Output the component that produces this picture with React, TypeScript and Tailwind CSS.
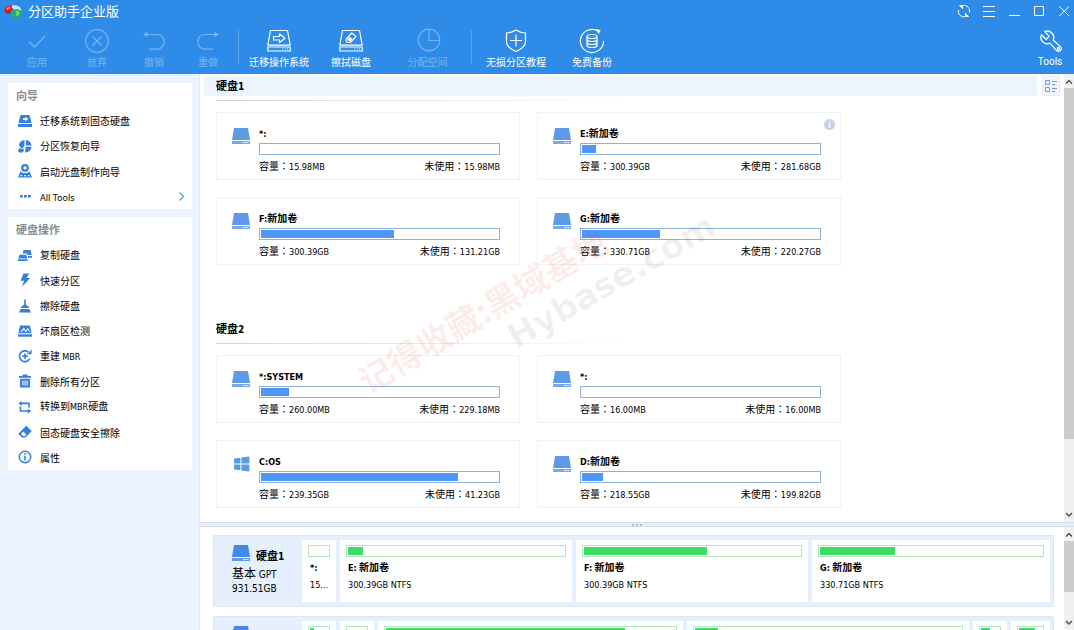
import { ReactNode } from "react";
import clsx from "clsx";

type Volume = {
  name: string;
  label?: string;
  total: string;
  free: string;
  used: number; // percent of the bar
  windows?: boolean;
  info?: boolean;
};

type Partition = {
  name: string;
  label?: string;
  size: string;
  used: number;
  weight: number;
};

const disks: { title: string; volumes: Volume[] }[] = [
  {
    title: "硬盘1",
    volumes: [
      { name: "*:", total: "15.98MB", free: "15.98MB", used: 0 },
      { name: "E:", label: "新加卷", total: "300.39GB", free: "281.68GB", used: 6, info: true },
      { name: "F:", label: "新加卷", total: "300.39GB", free: "131.21GB", used: 56 },
      { name: "G:", label: "新加卷", total: "330.71GB", free: "220.27GB", used: 33 },
    ],
  },
  {
    title: "硬盘2",
    volumes: [
      { name: "*:SYSTEM", total: "260.00MB", free: "229.18MB", used: 12 },
      { name: "*:", total: "16.00MB", free: "16.00MB", used: 0 },
      { name: "C:OS", total: "239.35GB", free: "41.23GB", used: 83, windows: true },
      { name: "D:", label: "新加卷", total: "218.55GB", free: "199.82GB", used: 9 },
    ],
  },
];

const maps: { title: string; size: string; partitions: Partition[] }[] = [
  {
    title: "硬盘1",
    size: "931.51GB",
    partitions: [
      { name: "*:", size: "15.98MB", used: 0, weight: 34 },
      { name: "E:", label: "新加卷", size: "300.39GB NTFS", used: 7, weight: 232 },
      { name: "F:", label: "新加卷", size: "300.39GB NTFS", used: 57, weight: 232 },
      { name: "G:", label: "新加卷", size: "330.71GB NTFS", used: 34, weight: 238 },
    ],
  },
  {
    title: "硬盘2",
    size: "476.94GB",
    partitions: [
      { name: "*:", label: "SYSTEM", size: "260.00MB", used: 22, weight: 34 },
      { name: "*:", size: "16.00MB", used: 0, weight: 34 },
      { name: "C:", label: "OS", size: "239.35GB NTFS", used: 83, weight: 304 },
      { name: "D:", label: "新加卷", size: "218.55GB NTFS", used: 9, weight: 282 },
      { name: "*:", size: "1.00GB", used: 52, weight: 34 },
      { name: "*:", size: "17.00GB", used: 70, weight: 39 },
    ],
  },
];

const Latin = ({ children, className }: { children: ReactNode; className?: string }) => (
  <span className={clsx("font-['DejaVu_Sans_Condensed','Open_Sans',sans-serif]", className)}>{children}</span>
);

/* ---------- icons ---------- */

const DriveIcon = ({ className }: { className?: string }) => (
  <svg width="18" height="16" viewBox="0 0 18 16" className={className} fill="currentColor" aria-hidden="true">
    <path d="M2 0h14l2 12H0z" />
    <path d="M0 13h18v3H0z" opacity=".85" />
    <path d="M11 14h1.400v1H11zM13.200 14h1.200v1h-1.200zM15.200 14h1.200v1h-1.200z" fill="#fff" />
  </svg>
);

const WindowsIcon = ({ className }: { className?: string }) => (
  <svg width="18" height="16" viewBox="0 0 18 16" className={className} fill="currentColor" aria-hidden="true">
    <path d="M2 2.600l6.400-.9v5.800H2zM9.400 1.500L17.400.4v7.100h-8zM2 8.500h6.400v5.800L2 13.400zM9.400 8.500h8v7.100l-8-1.100z" />
  </svg>
);

const LogoIcon = () => (
  <svg width="18" height="15" viewBox="0 0 18 15" aria-hidden="true">
    <path d="M9.600 5.400c3-.8 6.600-.4 7.600 1.600.6 4-3 7-7 6.800-2.600-.2-4-2-4-4.200C7.600 10.400 9 10 10 9c1.200-1.400 1-2.600-.4-3.600z" fill="#22b84a" />
    <path d="M8 1.600C13 .6 17.400 3 17.200 7c-1.600-2.200-5-2-7.600-1.600C7.600 4.200 6.800 3 8 1.600z" fill="#bfe6ff" />
    <path d="M.5 6.500C.5 2.500 4.500.8 8.300 1.600 6.800 3 7.600 4.200 9.900 5.400 7 5.800 6 7 6.300 10 3.200 10.200.5 9 .5 6.500z" fill="#d8151f" />
    <path d="M2.200 4.400c1-1.400 2.800-2 4.400-1.800-.6.8-.4 1.600.2 2.400-2 .2-3 .8-3.800 1.600-.8-.6-1-1.400-.8-2.200z" fill="#ff6a5c" />
    <path d="M11.600 7c2 0 3.600.6 4.200 1.800-.6 2-2.200 3.200-4.400 3.400 1.400-1.600 1.600-3.600.2-5.200z" fill="#7de36b" />
  </svg>
);

const Line = ({ children }: { children: ReactNode }) => (
  <svg
    width="26"
    height="26"
    viewBox="0 0 26 26"
    fill="none"
    stroke="currentColor"
    strokeWidth="1.2"
    strokeLinejoin="round"
    aria-hidden="true"
  >
    {children}
  </svg>
);

const Solid = ({ children }: { children: ReactNode }) => (
  <svg width="14" height="14" viewBox="0 0 14 14" fill="currentColor" className="shrink-0 text-[#3580dc]" aria-hidden="true">
    {children}
  </svg>
);

const toolIcons = {
  apply: <path d="M5 14l5.500 5L21 8" />,
  discard: (
    <>
      <circle cx="13" cy="13" r="11.300" />
      <path d="M8.500 8.500l9 9M17.500 8.500l-9 9" />
    </>
  ),
  undo: (
    <>
      <path d="M4 6.500h12a7.300 7.300 0 010 14.600H8" />
      <path d="M2 6.500l4.500-2.800v5.600z" fill="currentColor" stroke="none" />
    </>
  ),
  redo: (
    <>
      <path d="M22 6.500H10a7.300 7.300 0 000 14.600h8" />
      <path d="M24 6.500l-4.500-2.800v5.600z" fill="currentColor" stroke="none" />
    </>
  ),
  migrate: (
    <>
      <path d="M4.500 2.500h17l2.700 14.600H1.800zM1.800 19h22.400v4H1.800z" />
      <path d="M7.500 8.500h6V5.800l5.500 4.400-5.500 4.300V12h-6z" />
      <path d="M16.500 21h1M18.800 21h1M21 21h1" />
    </>
  ),
  wipe: (
    <>
      <path d="M4.500 2.500h17l2.700 14.600H1.800zM1.800 19h22.400v4H1.800z" />
      <path d="M8.200 11l5.600-6 4.200 3.500-5.600 6H9.200L8.200 13z" />
      <path d="M10 11.500l1.800-2 1.800 1.600-1.800 2z" fill="currentColor" />
      <path d="M16.500 21h1M18.800 21h1M21 21h1" />
    </>
  ),
  pie: (
    <>
      <circle cx="14" cy="12" r="10.800" />
      <path d="M14 1.200v11.300h10.800" />
    </>
  ),
  shield: (
    <>
      <path d="M13 2c3 2 6 2.800 9.500 3v9c0 4-4 7-9.500 9.500C7.500 21 3.500 18 3.500 14V5C7 4.800 10 4 13 2z" />
      <path d="M13 6.500v12M7 12.500h12" />
    </>
  ),
  backup: (
    <>
      <path d="M18.500 2.800A11.600 11.600 0 1024.600 13" />
      <path d="M16.500 1l5.200 1-2 4.300z" fill="currentColor" stroke="none" />
      <ellipse cx="13" cy="8.500" rx="5" ry="2" />
      <path d="M8 8.500v9c0 1.200 2 2 5 2s5-.8 5-2v-9M8 11.500c0 1.200 2 2 5 2s5-.8 5-2M8 14.500c0 1.200 2 2 5 2s5-.8 5-2" />
    </>
  ),
  wrench: (
    <g transform="translate(27 1) scale(-1.05 1.05)">
      <path d="M14.700 6.300a1 1 0 000 1.400l1.600 1.600a1 1 0 001.400 0l3.770-3.770a6 6 0 01-7.940 7.940l-6.410 6.910a2.500 2.500 0 01-3.700-3.600l6.910-6.310a6 6 0 017.940-7.940z" />
      <circle cx="5.400" cy="18.600" r="1" />
    </g>
  ),
};

const menuIcons = {
  migrate: (
    <>
      <path fillRule="evenodd" d="M2.500 1h9L13.600 9H.4zM5 4.200v1.900h2.400v1.500L10.200 5 7.400 2.700v1.500z" />
      <path d="M0 10h14v3H0z" />
    </>
  ),
  recover: (
    <>
      <path d="M6.400 1v6.200L4 9.400A6 6 0 011 6.600C1.200 3.500 3.500 1.200 6.400 1zM7.800 1a6 6 0 015.800 5.500H7.800zM7.800 7.800h5.800A6 6 0 017 13.400z" />
      <path d="M1.600 9l1.400.8h2.800v1.600l-1 2H1L0 11.400z" />
    </>
  ),
  boot: (
    <>
      <path fillRule="evenodd" d="M7 0a3.900 3.900 0 110 7.800A3.900 3.900 0 017 0zm0 2.300a1.600 1.600 0 100 3.200 1.600 1.600 0 000-3.200z" />
      <path d="M2.500 7.300L4.600 9h4.800l2.100-1.700L14 13.500H0z" />
      <path d="M2.500 11h1.600v1.300H2.500zM6.200 11h1.600v1.300H6.200zM9.900 11h1.600v1.300H9.900z" fill="#fff" />
    </>
  ),
  dots: <path d="M2 6h2.800v2.500H2zM6 6h2.800v2.500H6zM10 6h2.800v2.500H10z" />,
  copy: <path d="M5.500 2h7l1.200 5H9.500L9 5.500H4.800zM10 8h4v1.800h-4zM1.500 6.800h6.800l1 3.700H.2zM0 11.300h9.500V13H0z" />,
  bolt: <path d="M5.500.5h5.800L8.500 5h3.800L4 13.700l2-6H2.500z" />,
  broom: <path d="M6.200.5h1.600v5L11 8v1H3V8l3.200-2.500zM2.800 10h8.400l1.800 3.500H1z" />,
  sector: (
    <>
      <path fillRule="evenodd" d="M2 1.500h10L13.600 9.200H.4zM2.500 7.800h1.800l1.600-2.400 2 3 1.800-2.800 1.300 2.200h1l-2.300-4-1.900 3-2-3.200-2.200 3.200H2.500z" />
      <path d="M0 10.300h14v2.400H0z" />
    </>
  ),
  rebuild: (
    <>
      <path d="M11.800 9.500a5.400 5.400 0 11-1.400-6.400" fill="none" stroke="currentColor" strokeWidth="1.700" />
      <path d="M9 5.200h4.600V.6zM6.200 4.300h1.600v2h2v1.600h-2v2H6.200v-2h-2V6.300h2z" />
    </>
  ),
  trash: (
    <>
      <path d="M4.500.5h5V2H13v1.800H1V2h3.500z" />
      <path fillRule="evenodd" d="M2 4.800h10v8.700H2zM4.300 6.500v5h1.100v-5zM6.500 6.500v5h1.100v-5zM8.700 6.500v5h1.100v-5z" />
    </>
  ),
  convert: (
    <path d="M3.600.8v1.800h8.200v5h-1.600V4.200H3.600V6L.6 3.400zM1.600 6.600h1.600v3.600h6.600V8.400l3.200 2.700-3.200 2.700V11.800H1.600z" />
  ),
  eraser: <path fillRule="evenodd" d="M8.200.8L13.700 6 7.500 12.500H4L.3 8.800zM5.300 6.600L3 9l2 2h2l1.200-1.500z" />,
  info: (
    <>
      <circle cx="7" cy="7" r="5.700" fill="none" stroke="currentColor" strokeWidth="1.500" />
      <path d="M6.200 3.200h1.600v1.600H6.200zM6.200 5.800h1.600v4.800H6.200z" />
    </>
  ),
};

/* ---------- header ---------- */

type ToolProps = { icon: keyof typeof toolIcons; label: string; width: string; disabled?: boolean };

const ToolButton = ({ icon, label, width, disabled }: ToolProps) => (
  <button
    disabled={disabled}
    className={clsx("flex shrink-0 flex-col items-center text-[10px] leading-4", width, disabled ? "text-[#75b4f0]" : "text-white")}
  >
    <Line>{toolIcons[icon]}</Line>
    <span className="whitespace-nowrap">{label}</span>
  </button>
);

const ToolDivider = () => <div className="mt-0.5 mr-1 ml-[3px] h-[34px] w-px shrink-0 bg-[#5aa6ee]" />;

const windowButtons = [
  {
    label: "刷新",
    icon: (
      <>
        <path d="M6 1.500A5.500 5.500 0 0112.300 8.500M1.500 6A5.500 5.500 0 008 12.700" />
        <path d="M2.500 1.500h3v3zM11.500 12.500h-3v-3z" fill="currentColor" />
      </>
    ),
  },
  { label: "菜单", icon: <path d="M1 2.500h12M1 7.500h12M1 12.500h12" /> },
  { label: "最小化", icon: <path d="M2 11.500h11" /> },
  { label: "最大化", icon: <path d="M2.500 2.500h9v9h-9z" /> },
  { label: "关闭", icon: <path d="M2.500 2.500l9.500 9.500M12 2.500L2.500 12" /> },
];

const Header = () => (
  <header className="flex shrink-0 flex-col bg-[#2e8ce8] pb-1 text-white">
    <div className="flex h-[22px] items-center justify-between pr-[3px] pl-1">
      <div className="flex items-center gap-1.5">
        <LogoIcon />
        <h1 className="text-[13px] leading-5">分区助手企业版</h1>
      </div>
      <div className="flex gap-[11px]">
        {windowButtons.map((b) => (
          <button key={b.label} aria-label={b.label}>
            <svg width="14" height="14" viewBox="0 0 14 14" fill="none" stroke="currentColor" strokeWidth="1">
              {b.icon}
            </svg>
          </button>
        ))}
      </div>
    </div>
    <div className="flex items-start justify-between pt-1.5">
      <div className="flex pl-[7px]">
        <ToolButton icon="apply" label="应用" width="w-[60px]" disabled />
        <ToolButton icon="discard" label="放弃" width="w-[60px]" disabled />
        <ToolButton icon="undo" label="撤销" width="w-[54px]" disabled />
        <ToolButton icon="redo" label="重做" width="w-[54px]" disabled />
        <ToolDivider />
        <ToolButton icon="migrate" label="迁移操作系统" width="w-[72px]" />
        <ToolButton icon="wipe" label="擦拭磁盘" width="w-[72px]" />
        <ToolButton icon="pie" label="分配空间" width="w-[81px]" disabled />
        <ToolDivider />
        <ToolButton icon="shield" label="无损分区教程" width="w-20" />
        <ToolButton icon="backup" label="免费备份" width="w-[72px]" />
      </div>
      <div className="font-[Roboto,sans-serif]">
        <ToolButton icon="wrench" label="Tools" width="w-12" />
      </div>
    </div>
  </header>
);

/* ---------- sidebar ---------- */

type MenuItem = { icon: keyof typeof menuIcons; label: ReactNode; arrow?: boolean };

const wizardItems: MenuItem[] = [
  { icon: "migrate", label: "迁移系统到固态硬盘" },
  { icon: "recover", label: "分区恢复向导" },
  { icon: "boot", label: "启动光盘制作向导" },
  { icon: "dots", label: <span className="font-['Noto_Sans',sans-serif] text-[9px]">All Tools</span>, arrow: true },
];

const diskItems: MenuItem[] = [
  { icon: "copy", label: "复制硬盘" },
  { icon: "bolt", label: "快速分区" },
  { icon: "broom", label: "擦除硬盘" },
  { icon: "sector", label: "坏扇区检测" },
  { icon: "rebuild", label: <>重建 <Latin className="text-[9px]">MBR</Latin></> },
  { icon: "trash", label: "删除所有分区" },
  { icon: "convert", label: <>转换到<Latin className="text-[9px]">MBR</Latin>硬盘</> },
  { icon: "eraser", label: "固态硬盘安全擦除" },
  { icon: "info", label: "属性" },
];

const MenuCard = ({ title, items, height }: { title: string; items: MenuItem[]; height: string }) => (
  <section className={clsx("grid auto-rows-fr bg-white", height)}>
    <h2 className="flex items-center px-2 text-[11px] font-bold text-[#8b8f94]">{title}</h2>
    {items.map((item) => (
      <button key={item.icon} className="flex items-center gap-2 pr-1.5 pl-2.5 text-left text-[10px] text-black">
        <Solid>{menuIcons[item.icon]}</Solid>
        <span className="flex-1 whitespace-nowrap">{item.label}</span>
        {item.arrow && (
          <svg width="9" height="9" viewBox="0 0 9 9" fill="none" stroke="#4a9bea" strokeWidth="1.200" aria-hidden="true">
            <path d="M2.500.5l4 4-4 4" />
          </svg>
        )}
      </button>
    ))}
  </section>
);

/* ---------- main area ---------- */

const Amount = ({ label, value }: { label: string; value: string }) => (
  <span className="whitespace-nowrap">
    {label}
    <span className="font-['Noto_Sans_CJK_TC',sans-serif]">：</span>
    <Latin className="text-[9px]">{value}</Latin>
  </span>
);

const VolumeCard = ({ volume }: { volume: Volume }) => (
  <article className="relative flex w-[304px] gap-[9px] border border-[#f1f2f4] pt-3 pr-[19px] pb-[5px] pl-[15px]">
    {volume.windows ? (
      <WindowsIcon className="mt-[3px] shrink-0 text-[#5f9ae6]" />
    ) : (
      <DriveIcon className="mt-[3px] shrink-0 text-[#5f9ae6]" />
    )}
    <div className="min-w-0 flex-1 text-[10px] leading-4 text-black">
      <h3 className="h-4 font-bold">
        <Latin className="text-[9px]">{volume.name}</Latin>
        {volume.label}
      </h3>
      <div className="mt-0.5 h-3 border border-[#8fb2dc] p-px">
        <div className="h-full bg-[#4d97fb]" style={{ width: `${volume.used}%` }} />
      </div>
      <div className="mt-[3px] flex h-4 justify-between">
        <Amount label="容量" value={volume.total} />
        <Amount label="未使用" value={volume.free} />
      </div>
    </div>
    {volume.info && (
      <button
        aria-label="信息"
        className="absolute top-1.5 right-[5px] flex size-[11px] items-center justify-center rounded-full bg-[#c6d1e3] font-['Open_Sans',sans-serif] text-[8px] font-bold text-white"
      >
        i
      </button>
    )}
  </article>
);

const Scrollbar = ({ thumb }: { thumb: string }) => (
  <div className="flex w-[10px] shrink-0 flex-col items-center bg-[#f0f0f0] text-[#505050]" aria-hidden="true">
    <svg width="10" height="14" viewBox="0 0 10 14" fill="none" stroke="currentColor" strokeWidth="1.500">
      <path d="M2 9.500l3-3 3 3" />
    </svg>
    <div className={clsx("w-full bg-[#cdcdcd]", thumb)} />
    <svg width="10" height="14" viewBox="0 0 10 14" fill="none" stroke="currentColor" strokeWidth="1.500" className="mt-auto">
      <path d="M2 5l3 3 3-3" />
    </svg>
  </div>
);

const Watermark = () => (
  <div className="pointer-events-none absolute inset-0 overflow-hidden font-bold whitespace-nowrap" aria-hidden="true">
    <p className="absolute top-[236px] left-[282px] -translate-x-1/2 -translate-y-1/2 -rotate-31 text-[34px] leading-none text-[#e83020]/9">
      记得收藏:黑域基地
    </p>
    <p className="absolute top-[207px] left-[411px] -translate-x-1/2 -translate-y-1/2 -rotate-30 font-['DejaVu_Sans',sans-serif] text-[34px] leading-none text-black/6">
      Hybase.com
    </p>
  </div>
);

const DiskOverview = () => (
  <div className="relative flex min-h-0 flex-1">
    <div className="flex min-w-0 flex-1 flex-col gap-[54px] overflow-hidden pt-0.5 pl-1">
      {disks.map((disk, i) => (
        <section key={disk.title}>
          <div className="flex pr-1">
            <h2 className={clsx("h-5 flex-1 pl-3 text-[11px] leading-[18px] font-bold text-black", i === 0 && "bg-[#ecf4fe]")}>
              硬盘<Latin className="text-[10px]">{i + 1}</Latin>
            </h2>
            {i === 0 && (
              <button aria-label="切换视图" className="ml-[5px] flex h-5 w-[18px] items-center justify-center border border-[#e3ebf6] bg-[#f3f7fd]">
                <svg width="12" height="12" viewBox="0 0 12 12" fill="none" stroke="#6b9ad6">
                  <path d="M.5.5h4v4h-4zM.5 7.500h4v4h-4zM7 1.500h5M7 4.500h3M7 8.500h5M7 11.500h3" />
                </svg>
              </button>
            )}
          </div>
          <div className="mt-1 ml-3 h-px w-[420px] bg-linear-to-r from-[#cdd6e0] to-transparent" />
          <div className="mt-[11px] flex flex-wrap gap-[17px] pl-3">
            {disk.volumes.map((volume) => (
              <VolumeCard key={volume.name} volume={volume} />
            ))}
          </div>
        </section>
      ))}
    </div>
    <Scrollbar thumb="h-[351px]" />
    <Watermark />
  </div>
);

const DiskMap = () => (
  <div className="flex h-[103px] shrink-0">
    <div className="flex min-w-0 flex-1 flex-col gap-[9px] overflow-hidden pt-2 pr-[10px] pl-[13px]">
      {maps.map((disk, i) => (
        <section key={disk.title} className="flex h-[72px] shrink-0 border border-[#dbe6f6] bg-[#e6effd] pr-[3px]">
          <div className="w-[88px] shrink-0 pt-[9px] pl-[18px] text-black">
            <div className="flex h-5 gap-1.5 text-[11px] leading-5 font-bold">
              <DriveIcon className="text-[#4389ea]" />
              <h2>
                硬盘<Latin className="text-[10px]">{i + 1}</Latin>
              </h2>
            </div>
            <p className="h-4 text-[12px] leading-4">
              基本 <Latin className="text-[10px]">GPT</Latin>
            </p>
            <p className="h-4 font-['DejaVu_Sans_Condensed','Open_Sans',sans-serif] text-[10px] leading-4">{disk.size}</p>
          </div>
          <div className="flex min-w-0 flex-1 gap-1 py-1">
            {disk.partitions.map((part, n) => (
              <div key={n} className="min-w-0 basis-0 bg-white" style={{ flexGrow: part.weight }}>
                <div className="px-1.5 pt-[5px] text-[10px] leading-4 text-black">
                  <div className="h-3 border border-[#b4e6bf] p-px">
                    <div className="h-full bg-[#3ddc62]" style={{ width: `${part.used}%` }} />
                  </div>
                  <h3 className="mt-0.5 h-4 truncate pl-0.5 font-bold">
                    <Latin className="text-[9px]">{part.name}</Latin> {part.label}
                  </h3>
                  <p className="mt-0.5 truncate pl-0.5 font-['DejaVu_Sans_Condensed','Open_Sans',sans-serif] text-[9px] leading-4">
                    {part.size}
                  </p>
                </div>
              </div>
            ))}
          </div>
        </section>
      ))}
    </div>
    <Scrollbar thumb="h-[51px]" />
  </div>
);

export default function App() {
  return (
    <div className="flex h-screen flex-col overflow-hidden bg-white font-['Noto_Sans_CJK_SC',sans-serif]">
      <Header />
      <div className="flex min-h-0 flex-1">
        <nav className="flex w-[200px] shrink-0 flex-col gap-2 border-r border-[#dfe8f3] bg-[#eaf3ff] pt-[9px] pr-[7px] pl-2">
          <MenuCard title="向导" items={wizardItems} height="min-h-[126px]" />
          <MenuCard title="硬盘操作" items={diskItems} height="min-h-[253px]" />
        </nav>
        <main className="flex min-w-0 flex-1 flex-col">
          <DiskOverview />
          <div className="flex h-[5px] shrink-0 items-center justify-center gap-0.5 border-y border-[#d3dde9] bg-[#e9eef6]">
            <i className="size-0.5 bg-[#b3bccb]" />
            <i className="size-0.5 bg-[#b3bccb]" />
            <i className="size-0.5 bg-[#b3bccb]" />
          </div>
          <DiskMap />
        </main>
      </div>
    </div>
  );
}
